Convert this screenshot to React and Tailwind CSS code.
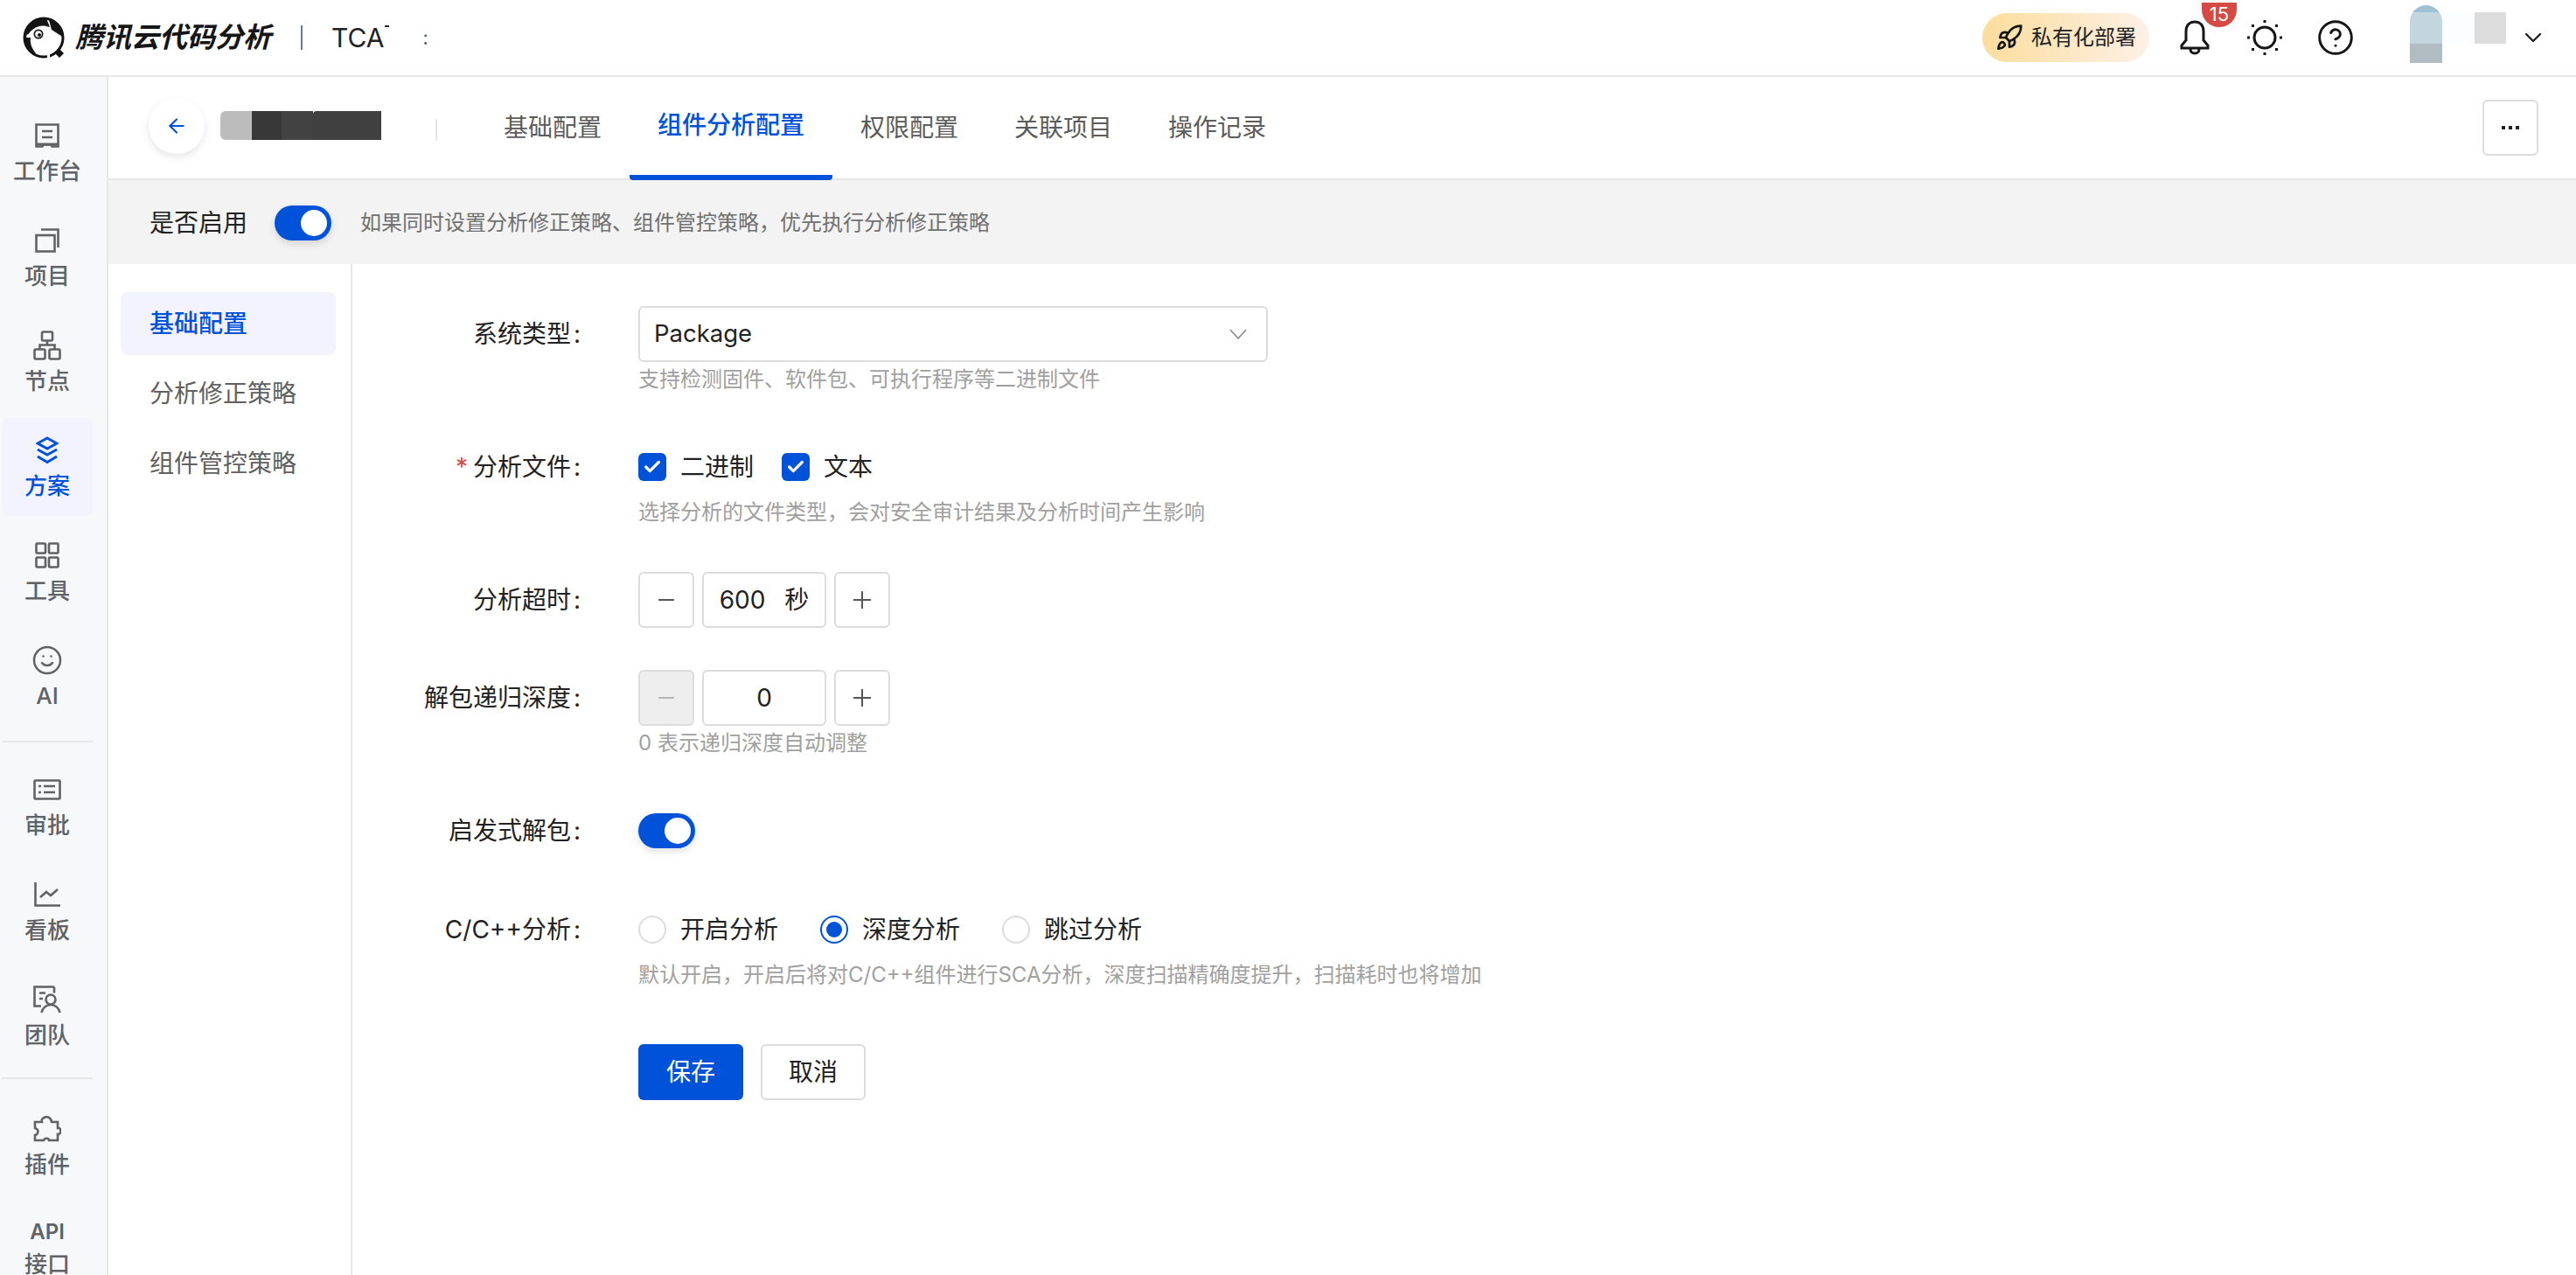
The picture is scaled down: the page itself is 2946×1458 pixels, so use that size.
import { Rocket, CircleHelp, ChevronDown, ArrowLeft, Smile, Check, Plus, Minus } from 'lucide-react'

const Logo = () => (
  <svg width="48" height="48" viewBox="0 0 48 48" className="shrink-0">
    <circle cx="24" cy="24" r="22" fill="none" stroke="#141414" strokeWidth="3" />
    <path d="M3 26C1 12 12 2 24 2h3l4 10c-10-4-21-1-28 14z" fill="#141414" />
    <path d="M30 4l3 11 14 9c0-9-7-18-17-20z" fill="#141414" />
    <path d="M2 24c0 8 4 16 10 20l3-2c-5-6-7-12-6-18z" fill="#141414" />
    <circle cx="6" cy="22" r="1.8" fill="#fff" />
    <circle cx="18" cy="20" r="5.5" fill="#141414" />
    <circle cx="18" cy="20" r="3.8" fill="#fff" />
    <circle cx="19" cy="21" r="2" fill="#141414" />
    <path d="M42 37l5 5-5 5-5-5z" fill="#141414" />
    <rect x="28" y="43" width="3" height="5" fill="#fff" />
  </svg>
)

const Bell = () => (
  <svg width="34" height="40" viewBox="0 0 34 40" fill="none" stroke="#161616" strokeWidth="3" className="shrink-0">
    <path d="M2 32v-3l5-6V13C7 6 11 2 17 2s10 4 10 11v10l5 6v3z" />
    <path d="M12 33c0 3 2 5 5 5s5-2 5-5" />
  </svg>
)

const Sun = () => (
  <svg width="40" height="40" viewBox="0 0 40 40" fill="#161616" className="shrink-0">
    <circle cx="20" cy="20" r="12" fill="none" stroke="#161616" strokeWidth="3" />
    <rect x="18.5" y="0" width="3" height="3" />
    <rect x="18.5" y="37" width="3" height="3" />
    <rect x="0" y="18.5" width="3" height="3" />
    <rect x="37" y="18.5" width="3" height="3" />
    <rect x="5" y="5" width="3" height="3" />
    <rect x="32" y="5" width="3" height="3" />
    <rect x="5" y="32" width="3" height="3" />
    <rect x="32" y="32" width="3" height="3" />
  </svg>
)

const base = { fill: 'none', stroke: 'currentColor', strokeWidth: 2.6 }

const IconWork = () => (
  <svg width="28" height="28" viewBox="0 0 28 28" {...base}>
    <path d="M1.5 1.5h25v25h-7l-1-2h-9l-1 2h-7z" />
    <path d="M8 9h12M8 16h12" />
    <path d="M2 24h24" strokeWidth="3" />
  </svg>
)
const IconProject = () => (
  <svg width="28" height="28" viewBox="0 0 28 28" {...base}>
    <rect x="1.5" y="8" width="21" height="18.5" />
    <path d="M7 1.5h19.5V22" />
  </svg>
)
const IconNode = () => (
  <svg width="32" height="34" viewBox="0 0 32 34" {...base}>
    <rect x="10" y="1.5" width="12" height="10" rx="1.5" />
    <rect x="1.5" y="21.5" width="12" height="11" rx="1.5" />
    <rect x="18.5" y="21.5" width="12" height="11" rx="1.5" />
    <path d="M16 11.5v5M7.5 21.5v-5h17v5" />
  </svg>
)
const IconLayers = () => (
  <svg width="26" height="32" viewBox="0 0 26 32" fill="none" stroke="#0052d9" strokeWidth="3">
    <path d="M13 2l11 6-11 6-11-6z" />
    <path d="M2 15l11 6 11-6" />
    <path d="M2 23l11 6.5 11-6.5" />
  </svg>
)
const IconGrid = () => (
  <svg width="28" height="30" viewBox="0 0 28 30" {...base}>
    <rect x="1.5" y="1.5" width="10.5" height="11" rx="1" />
    <rect x="16" y="1.5" width="10.5" height="11" rx="1" />
    <rect x="1.5" y="17.5" width="10.5" height="11" rx="1" />
    <rect x="16" y="17.5" width="10.5" height="11" rx="1" />
  </svg>
)
const IconList = () => (
  <svg width="32" height="24" viewBox="0 0 32 24" {...base}>
    <rect x="1.5" y="1.5" width="29" height="21" rx="1" />
    <path d="M12 8h13M12 15h13" />
    <path d="M6 8h3M6 15h3" />
  </svg>
)
const IconChart = () => (
  <svg width="30" height="28" viewBox="0 0 30 28" {...base}>
    <path d="M1.5 0v26.5H30" />
    <path d="M7 17l7-6 5 4 8-7" />
  </svg>
)
const IconTeam = () => (
  <svg width="32" height="32" viewBox="0 0 32 32" {...base}>
    <path d="M24 1.5H1.5v22H9M24 1.5v7" />
    <path d="M7 8.5h7M7 15h4" />
    <circle cx="20" cy="16" r="5.5" />
    <path d="M9.5 31c1-5 5-9 10.5-9s9.5 4 10.5 9" />
  </svg>
)
const IconPuzzle = () => (
  <svg width="32" height="32" viewBox="0 0 32 32" {...base}>
    <path d="M2 8h8c-2-6 10-9 11 0h7v7c5-1 4 8 0 7v7H18c0-3-5-3-6 0H2v-6c3 0 4-4 3-6-1-1-2-2-3-2z" />
  </svg>
)

const navTop = [
  { label: '工作台', icon: <IconWork /> },
  { label: '项目', icon: <IconProject /> },
  { label: '节点', icon: <IconNode /> },
  { label: '方案', icon: <IconLayers />, active: true },
  { label: '工具', icon: <IconGrid /> },
  { label: 'AI', icon: <Smile size={36} strokeWidth={1.7} /> },
]
const navMid = [
  { label: '审批', icon: <IconList /> },
  { label: '看板', icon: <IconChart /> },
  { label: '团队', icon: <IconTeam /> },
]

function NavItem({ item }) {
  return (
    <div
      className={
        item.active
          ? 'h-[112px] shrink-0 rounded-lg bg-[#f3f3ff] text-[#0052d9] flex flex-col items-center'
          : 'h-[112px] shrink-0 rounded-lg text-[#606266] flex flex-col items-center'
      }
    >
      <div className="h-[74px] flex items-center justify-center">{item.icon}</div>
      <div className="text-[26px] leading-[34px] font-medium -mt-[13px]">{item.label}</div>
    </div>
  )
}

function Stepper({ value, unit, disabled }) {
  return (
    <div className="flex items-center gap-[9px] h-[64px]">
      <div
        className={
          disabled
            ? 'w-[64px] h-[64px] border-2 border-[#dcdcdc] bg-[#eeeeee] rounded-md text-[#b5b5b5] flex items-center justify-center'
            : 'w-[64px] h-[64px] border-2 border-[#dcdcdc] rounded-md text-[#555] flex items-center justify-center'
        }
      >
        <Minus size={28} strokeWidth={1.6} />
      </div>
      <div className="w-[142px] h-[64px] border-2 border-[#dcdcdc] rounded-md flex items-center justify-center gap-[22px] text-[#222]">
        <span>{value}</span>
        {unit && <span>{unit}</span>}
      </div>
      <div className="w-[64px] h-[64px] border-2 border-[#dcdcdc] rounded-md text-[#555] flex items-center justify-center">
        <Plus size={32} strokeWidth={1.5} />
      </div>
    </div>
  )
}

const Toggle = () => (
  <div className="w-[65px] h-[40px] rounded-full bg-[#0052d9] flex items-center justify-end pr-[5px] shadow-[0_4px_8px_rgba(0,0,0,0.12)] shrink-0">
    <div className="w-[30px] h-[30px] rounded-full bg-white" />
  </div>
)

function Box({ label }) {
  return (
    <div className="flex items-center gap-[16px]">
      <div className="w-[32px] h-[32px] rounded-md bg-[#0052d9] flex items-center justify-center text-white">
        <Check size={22} strokeWidth={3.5} />
      </div>
      <span className="text-[#222]">{label}</span>
    </div>
  )
}

function Radio({ label, checked }) {
  return (
    <div className="flex items-center gap-[16px]">
      {checked ? (
        <div className="w-[32px] h-[32px] rounded-full border-2 border-[#0052d9] flex items-center justify-center">
          <div className="w-[18px] h-[18px] rounded-full bg-[#0052d9]" />
        </div>
      ) : (
        <div className="w-[32px] h-[32px] rounded-full border-2 border-[#dcdcdc]" />
      )}
      <span className="text-[#222]">{label}</span>
    </div>
  )
}

function Row({ label, required, hint, className, children }) {
  return (
    <div className={className}>
      <div className="flex">
        <div className="w-[267px] h-[64px] mr-[60px] pr-[6px] flex items-center justify-end text-[#222]">
          {required && <span className="text-[#d54941] mr-[6px]">*</span>}
          {label}
          <span className="ml-[3px]">:</span>
        </div>
        <div className="flex items-center">{children}</div>
      </div>
      {hint && <div className="ml-[327px] mt-[4px] text-[24px] leading-[32px] text-[#a0a0a0]">{hint}</div>}
    </div>
  )
}

const tabs = ['基础配置', '组件分析配置', '权限配置', '关联项目', '操作记录']

export default function App() {
  return (
    <div className="w-[2946px] h-[1458px] overflow-hidden bg-white flex flex-col font-[Inter,'Noto_Sans_CJK_SC',sans-serif] text-[28px]">
      {/* Header */}
      <header className="h-[88px] shrink-0 border-b-2 border-[#e7e7e7] pl-[26px] flex items-center">
        <Logo />
        <span className="ml-[12px] text-[32px] font-bold italic text-[#161616] leading-none">腾讯云代码分析</span>
        <div className="w-[2px] h-[28px] bg-[#6b7a90] ml-[34px]" />
        <span className="ml-[33px] text-[30px] text-[#222] leading-none">TCA</span>
        <div className="w-[5px] h-[2px] bg-[#222] self-start mt-[29px]" />
        <span className="ml-[39px] text-[22px] text-[#555] leading-none">:</span>

        <div className="ml-auto flex items-center pr-[33px]">
          <div className="w-[191px] h-[56px] rounded-full bg-gradient-to-r from-[#fbdd9c] to-[#fdf0e6] flex items-center pl-[15px] gap-[9px]">
            <Rocket size={32} strokeWidth={2} className="text-[#161616]" />
            <span className="text-[24px] text-[#222]">私有化部署</span>
          </div>
          <div className="relative ml-[35px]">
            <Bell />
            <div className="absolute left-[25px] -top-[20px] w-[40px] h-[28px] rounded-b-full rounded-t-lg bg-[#d54a45] text-white text-[22px] leading-[26px] text-center">15</div>
          </div>
          <div className="ml-[43px]"><Sun /></div>
          <CircleHelp size={44} strokeWidth={1.6} className="ml-[39px] text-[#161616]" />
          <div className="ml-[63px] mb-[8px] w-[37px] h-[66px] rounded-t-full overflow-hidden flex flex-col">
            <div className="h-[8px] bg-[#9fc0d4]" />
            <div className="h-[36px] bg-[#c3d6de]" />
            <div className="h-[22px] bg-[#b0bcc1]" />
          </div>
          <div className="w-[37px] h-[36px] bg-[#fbfdfe] self-start mt-[8px]" />
          <div className="w-[36px] h-[36px] bg-[#dcdcdc] self-start mt-[8px]" />
          <ChevronDown size={32} strokeWidth={1.8} className="ml-[15px] text-[#222]" />
        </div>
      </header>

      <div className="flex-1 flex min-h-0">
        {/* Sidebar */}
        <aside className="w-[124px] shrink-0 bg-[#f7f8fa] border-r-2 border-[#e7e7e7] overflow-hidden">
          <div className="w-[104px] ml-[2px] pt-[30px] flex flex-col gap-[8px]">
            {navTop.map((item) => <NavItem key={item.label} item={item} />)}
            <div className="h-[2px] bg-[#e7e7e7] mt-[9px] mb-[9px] shrink-0" />
            {navMid.map((item) => <NavItem key={item.label} item={item} />)}
            <div className="h-[2px] bg-[#e7e7e7] mt-[6px] mb-[12px] shrink-0" />
            <NavItem item={{ label: '插件', icon: <IconPuzzle /> }} />
            <div className="h-[112px] shrink-0 text-[#606266] flex flex-col items-center pt-[20px]">
              <div className="text-[24px] leading-[30px] font-semibold">API</div>
              <div className="text-[26px] leading-[36px] font-medium mt-[4px]">接口</div>
            </div>
          </div>
        </aside>

        <main className="flex-1 min-w-0 flex flex-col">
          {/* Tabs */}
          <div className="h-[118px] shrink-0 border-b-2 border-[#e7e7e7] flex pl-[46px] pr-[43px]">
            <div className="w-[64px] h-[64px] mt-[24px] rounded-full bg-white shadow-[0_4px_10px_rgba(0,0,0,0.1)] flex items-center justify-center text-[#0052d9] shrink-0">
              <ArrowLeft size={26} strokeWidth={2} />
            </div>
            <div className="ml-[18px] mt-[39px] h-[33px] flex">
              <div className="w-[36px] bg-[#bcbcbc] rounded-l-md" />
              <div className="w-[34px] bg-[#383838]" />
              <div className="w-[36px] bg-[#424242]" />
              <div className="w-[78px] bg-[#404040] rounded-tl-sm" />
            </div>
            <div className="w-[2px] h-[25px] bg-[#e7e7e7] ml-[62px] mt-[48px]" />
            <div className="flex ml-[44px] h-[118px]">
              {tabs.map((t, i) => (
                <div
                  key={t}
                  className={
                    i === 1
                      ? 'px-[32px] h-[118px] flex items-center pb-[2px] text-[#0052d9] font-medium border-b-[6px] border-[#0052d9] rounded-b-sm'
                      : 'px-[32px] h-[118px] flex items-center pb-[2px] text-[#5c5c5c]'
                  }
                >
                  {t}
                </div>
              ))}
            </div>
            <div className="ml-auto mt-[26px] w-[64px] h-[64px] border-2 border-[#dcdcdc] rounded-md flex items-center justify-center gap-[4px]">
              <div className="w-[4px] h-[4px] bg-[#222]" />
              <div className="w-[4px] h-[4px] bg-[#222]" />
              <div className="w-[4px] h-[4px] bg-[#222]" />
            </div>
          </div>

          {/* Enable bar */}
          <div className="h-[96px] shrink-0 bg-[#f3f3f3] flex items-center pl-[47px] pt-[2px]">
            <span className="text-[#222]">是否启用</span>
            <div className="ml-[31px]"><Toggle /></div>
            <span className="ml-[33px] text-[24px] text-[#707070]">如果同时设置分析修正策略、组件管控策略，优先执行分析修正策略</span>
          </div>

          <div className="flex-1 flex min-h-0">
            {/* Sub menu */}
            <div className="w-[279px] shrink-0 border-r-2 border-[#e7e7e7] pt-[32px] pl-[14px] pr-[17px] flex flex-col gap-[8px]">
              <div className="h-[72px] rounded-lg bg-[#f3f3ff] text-[#0052d9] font-medium flex items-center pl-[33px]">基础配置</div>
              <div className="h-[72px] text-[#606060] flex items-center pl-[33px]">分析修正策略</div>
              <div className="h-[72px] text-[#606060] flex items-center pl-[33px]">组件管控策略</div>
            </div>

            {/* Form */}
            <div className="flex-1 min-w-0 pt-[48px]">
              <Row label="系统类型" hint="支持检测固件、软件包、可执行程序等二进制文件">
                <div className="w-[720px] h-[64px] border-2 border-[#dcdcdc] rounded-md pl-[16px] pr-[22px] flex items-center justify-between text-[#222]">
                  <span className="text-[27.5px]">Package</span>
                  <svg width="20" height="12" viewBox="0 0 20 12" fill="none" stroke="#8a8a8a" strokeWidth="1.6">
                    <path d="M1 1l9 10 9-10" />
                  </svg>
                </div>
              </Row>
              <Row className="mt-[52px]" required label="分析文件" hint="选择分析的文件类型，会对安全审计结果及分析时间产生影响">
                <div className="flex items-center gap-[32px]">
                  <Box label="二进制" />
                  <Box label="文本" />
                </div>
              </Row>
              <Row className="mt-[52px]" label="分析超时">
                <Stepper value="600" unit="秒" />
              </Row>
              <Row className="mt-[48px]" label="解包递归深度" hint="0 表示递归深度自动调整">
                <Stepper value="0" disabled />
              </Row>
              <Row className="mt-[52px]" label="启发式解包">
                <Toggle />
              </Row>
              <Row className="mt-[49px]" label="C/C++分析" hint="默认开启，开启后将对C/C++组件进行SCA分析，深度扫描精确度提升，扫描耗时也将增加">
                <div className="flex items-center gap-[48px]">
                  <Radio label="开启分析" />
                  <Radio label="深度分析" checked />
                  <Radio label="跳过分析" />
                </div>
              </Row>
              <div className="mt-[63px] ml-[327px] flex gap-[20px]">
                <div className="w-[120px] h-[64px] rounded-md bg-[#0052d9] text-white flex items-center justify-center">保存</div>
                <div className="w-[120px] h-[64px] rounded-md border-2 border-[#dcdcdc] text-[#222] flex items-center justify-center">取消</div>
              </div>
            </div>
          </div>
        </main>
      </div>
    </div>
  )
}
